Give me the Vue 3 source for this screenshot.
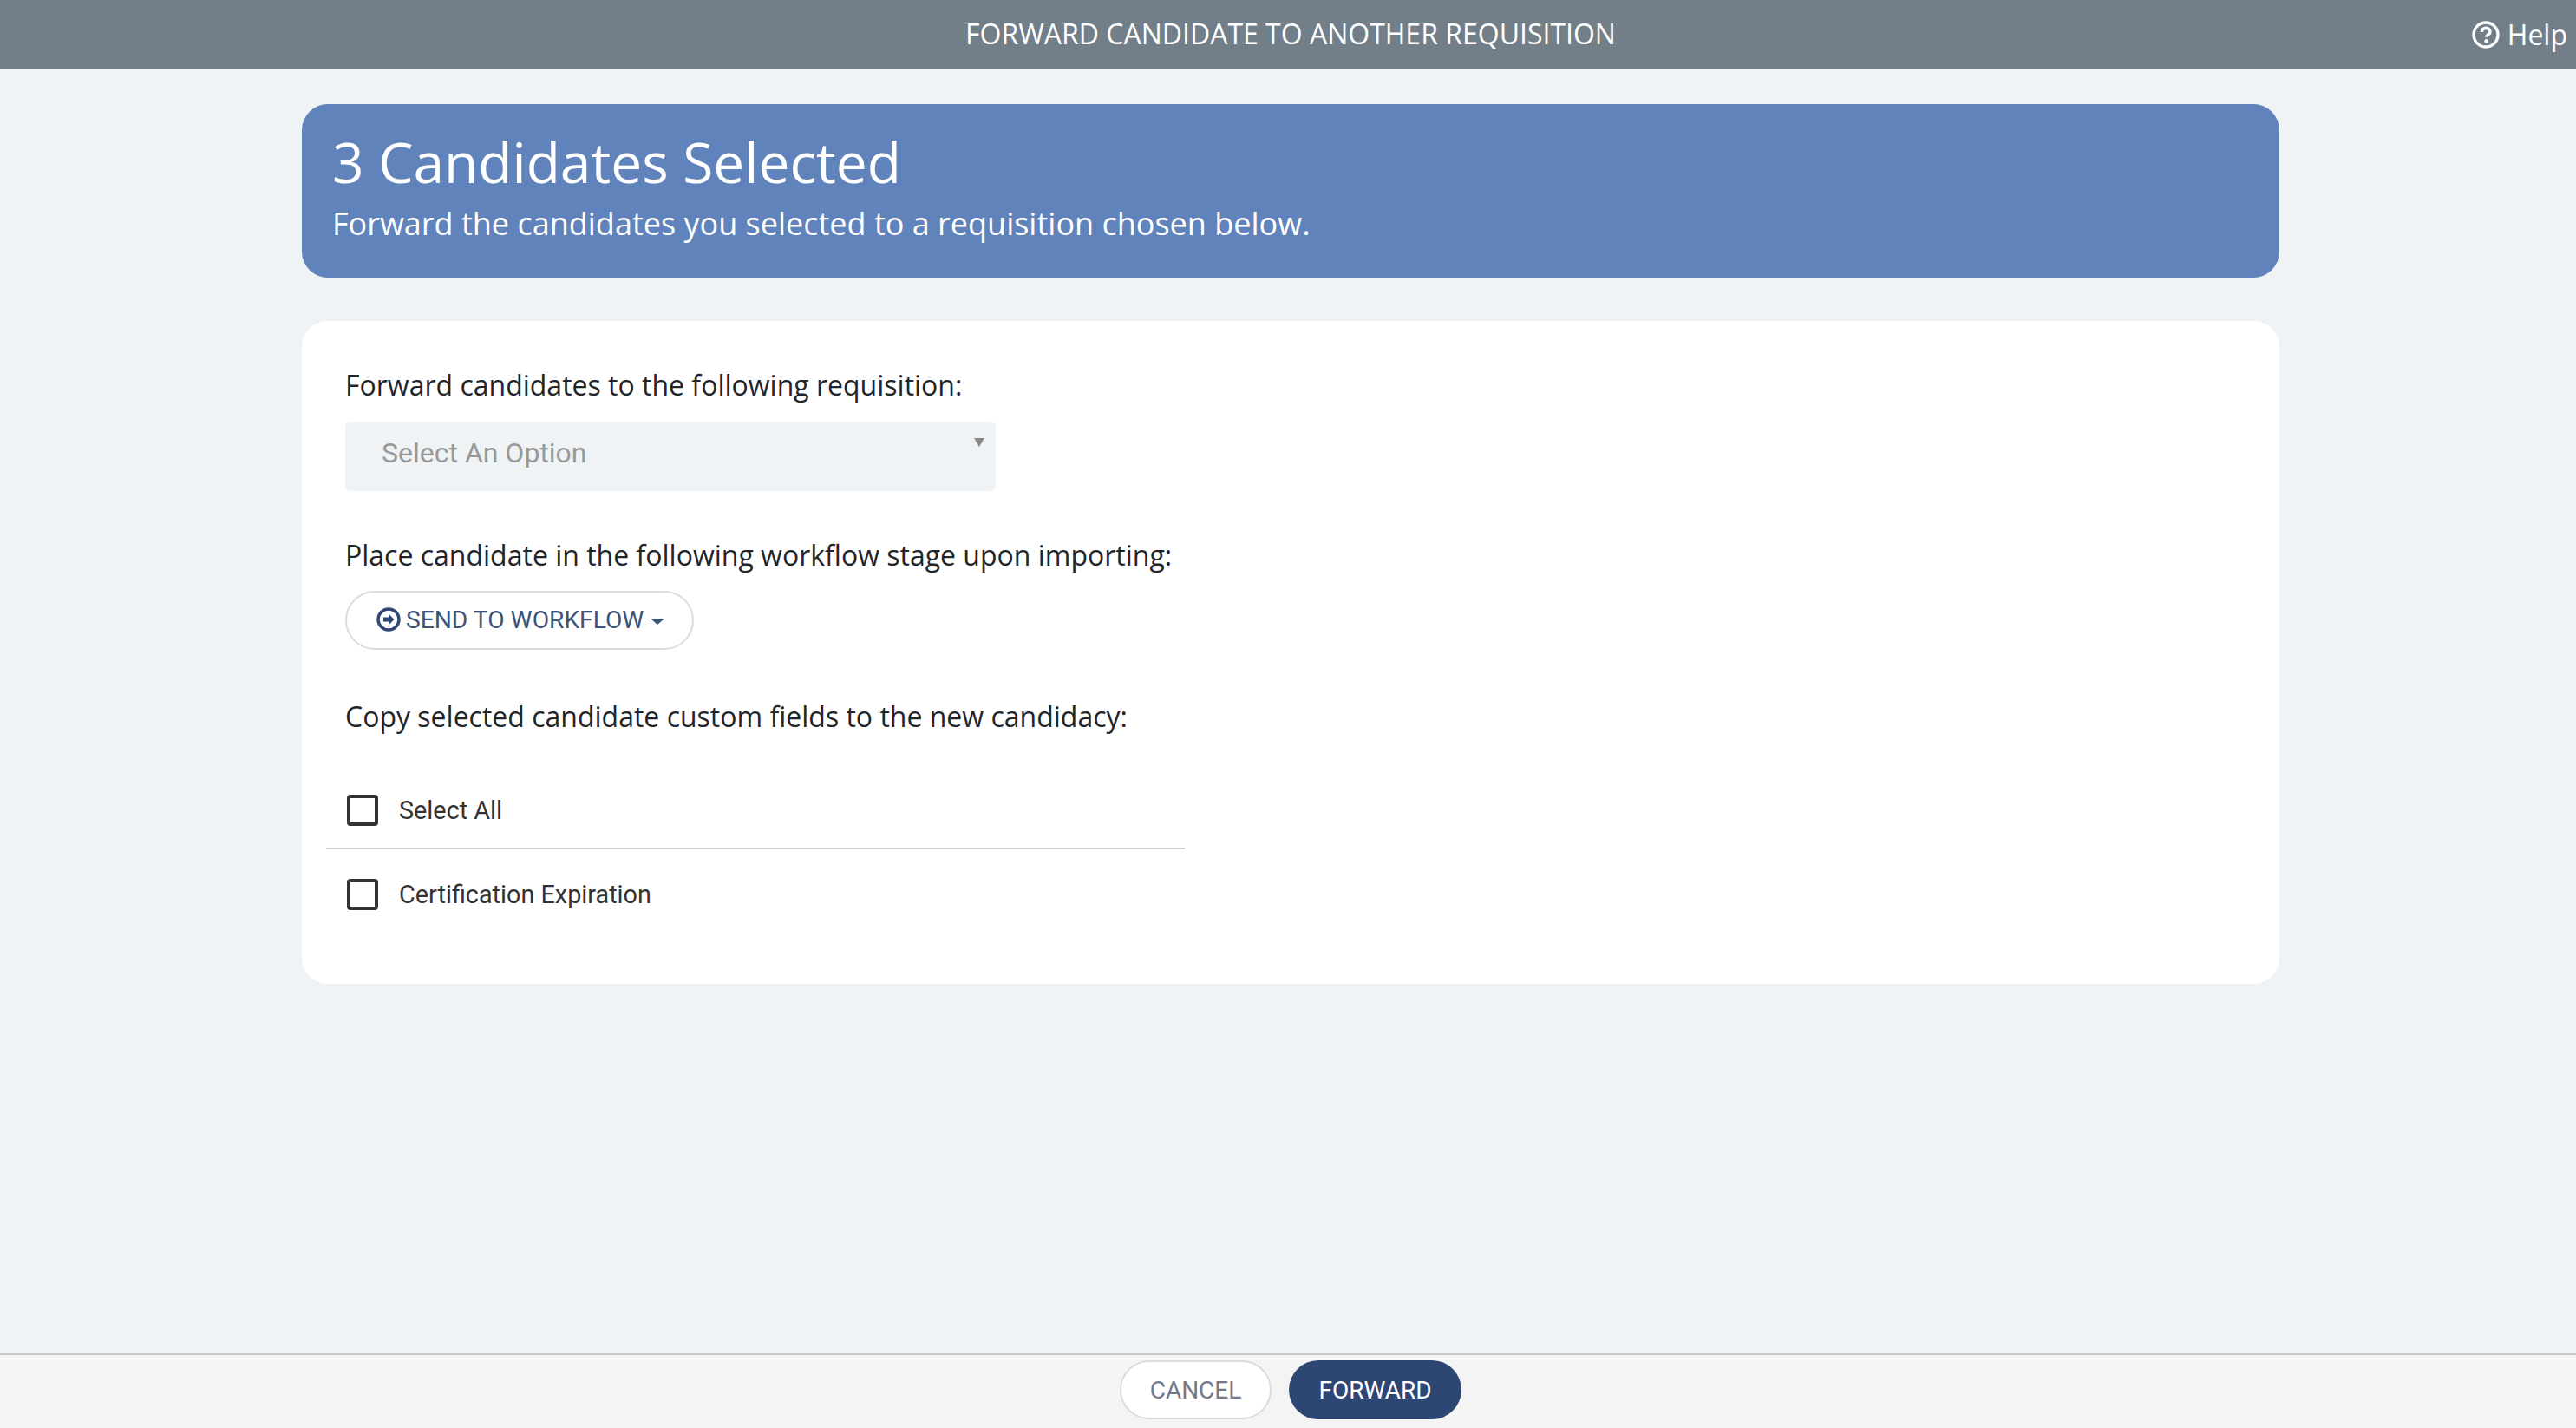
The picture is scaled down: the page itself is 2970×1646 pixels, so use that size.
<script setup>
const fields = ['Select All', 'Certification Expiration']
</script>

<template>
  <div class="page">
    <header class="topbar">
      <div class="topbar-title">FORWARD CANDIDATE TO ANOTHER REQUISITION</div>
      <div class="help">
        <svg class="help-icon" viewBox="0 0 32 32" aria-hidden="true">
          <circle cx="16" cy="16" r="14" fill="none" stroke="#fff" stroke-width="3.4" />
          <path d="M11.3 13c.1-2.8 2.1-4.6 4.9-4.6 2.7 0 4.7 1.7 4.7 4 0 1.9-1 2.8-2.4 3.7-1.2.8-1.7 1.3-1.7 2.7" fill="none" stroke="#fff" stroke-width="3.6" />
          <circle cx="16.6" cy="23.4" r="2.3" fill="#fff" />
        </svg>
        <span>Help</span>
      </div>
    </header>

    <main class="content">
      <section class="banner">
        <h1>3 Candidates Selected</h1>
        <p>Forward the candidates you selected to a requisition chosen below.</p>
      </section>

      <section class="card">
        <label class="label first">Forward candidates to the following requisition:</label>
        <div class="select">
          <span>Select An Option</span>
          <i class="select-arrow"></i>
        </div>

        <label class="label second">Place candidate in the following workflow stage upon importing:</label>
        <button class="workflow" type="button">
          <svg class="workflow-icon" viewBox="0 0 28 28" aria-hidden="true">
            <circle cx="14" cy="14" r="12" fill="none" stroke="#2e4674" stroke-width="3.4" />
            <path d="M14 7.5 20.5 14 14 20.5v-4H8v-5h6z" fill="#2e4674" />
          </svg>
          <span>SEND TO WORKFLOW</span>
          <i class="caret"></i>
        </button>

        <label class="label third">Copy selected candidate custom fields to the new candidacy:</label>
        <div class="fields">
          <div v-for="(f, i) in fields" :key="f" class="field" :class="{ divided: i === 0 }">
            <span class="box"></span>
            <span class="field-text">{{ f }}</span>
          </div>
        </div>
      </section>
    </main>

    <footer class="footer">
      <button class="btn cancel" type="button">CANCEL</button>
      <button class="btn forward" type="button">FORWARD</button>
    </footer>
  </div>
</template>

<style>
html, body { margin: 0; background: #eff3f6; }
</style>

<style scoped>
.page {
  height: 1646px;
  display: flex;
  flex-direction: column;
  background: #eff3f6;
  font-family: "Open Sans", sans-serif;
}
.topbar {
  height: 80px;
  flex: none;
  box-sizing: border-box;
  padding: 0 0 2px 6px;
  background: #727f89;
  color: #fff;
  position: relative;
  display: flex;
  align-items: center;
  justify-content: center;
}
.topbar-title { font-size: 32px; line-height: 76px; }
.help {
  position: absolute;
  right: 10px;
  top: 18px;
  display: flex;
  align-items: center;
  gap: 9px;
  font-size: 32px;
  line-height: 44px;
}
.help-icon { width: 32px; height: 32px; }
.content {
  flex: 1;
  width: 2280px;
  margin-left: 348px;
  padding-top: 40px;
}
.banner {
  height: 200px;
  box-sizing: border-box;
  background: #6083bb;
  border-radius: 30px;
  padding: 23px 35px 0;
  color: #fff;
}
.banner h1 {
  margin: 0;
  font-size: 64px;
  font-weight: 400;
  line-height: 88px;
}
.banner p {
  margin: 1px 0 0;
  font-size: 36px;
  line-height: 52px;
}
.card {
  margin-top: 50px;
  height: 764px;
  box-sizing: border-box;
  background: #fff;
  border-radius: 30px;
  padding: 52px 50px 0;
}
.label {
  display: block;
  font-size: 32px;
  line-height: 44px;
  color: #212529;
}
.select {
  margin-top: 20px;
  width: 750px;
  height: 80px;
  box-sizing: border-box;
  background: #eff3f6;
  border-radius: 6px;
  padding: 0 42px;
  display: flex;
  position: relative;
  font-family: Roboto, sans-serif;
  font-size: 32px;
  line-height: 73px;
  color: #999;
}
.select-arrow {
  position: absolute;
  right: 13px;
  top: 19px;
  border-left: 6px solid transparent;
  border-right: 6px solid transparent;
  border-top: 10px solid #888;
}
.second { margin-top: 52px; }
.workflow {
  margin-top: 19px;
  width: 402px;
  height: 68px;
  box-sizing: border-box;
  background: #fff;
  border: 2px solid #dcdcdc;
  border-radius: 34px;
  padding: 0 0 2px 34px;
  display: flex;
  align-items: center;
  color: #3d5479;
  font-family: Roboto, sans-serif;
  font-size: 28.2px;
}
.workflow-icon { width: 28px; height: 28px; margin-right: 6px; }
.caret {
  margin-left: 8px;
  margin-top: 4px;
  border-left: 8px solid transparent;
  border-right: 8px solid transparent;
  border-top: 7px solid #3d5479;
}
.third { margin-top: 55px; }
.fields {
  margin-top: 43px;
  width: 990px;
  margin-left: -22px;
}
.field {
  display: flex;
  align-items: center;
  height: 103px;
  padding-left: 24px;
}
.divided { border-bottom: 2px solid #ccc; height: 88px; box-sizing: border-box; }
.box {
  width: 36px;
  height: 36px;
  box-sizing: border-box;
  border: 4px solid #333;
  border-radius: 4px;
  flex: none;
}
.field-text {
  margin-left: 24px;
  font-family: Roboto, sans-serif;
  font-size: 28.8px;
  color: #333;
}
.footer {
  height: 86px;
  flex: none;
  box-sizing: border-box;
  background: #f4f4f4;
  border-top: 2px solid #c8c8c8;
  display: flex;
  justify-content: center;
  gap: 20px;
  padding: 6px 0 0 6px;
}
.btn {
  height: 68px;
  border-radius: 34px;
  box-sizing: border-box;
  font-family: Roboto, sans-serif;
  font-size: 28px;
  padding: 0;
}
.cancel {
  width: 175px;
  background: #fff;
  border: 2px solid #dcdcdc;
  color: #73798a;
}
.forward {
  width: 199px;
  background: #2e4674;
  border: 0;
  color: #fff;
}
</style>
